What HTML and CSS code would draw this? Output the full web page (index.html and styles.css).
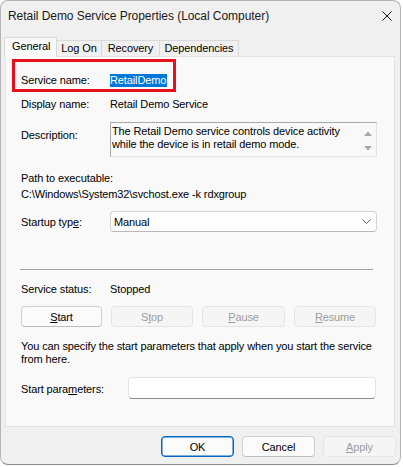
FILE: index.html
```html
<!DOCTYPE html>
<html>
<head>
<meta charset="utf-8">
<link rel="stylesheet" href="styles.css">
</head>
<body>
<div class="window">
  <div class="titlebar">
    <span class="title">Retail Demo Service Properties (Local Computer)</span>
    <svg class="close" width="10" height="10" viewBox="0 0 10 10"><path d="M0.5 0.5 L9.5 9.5 M9.5 0.5 L0.5 9.5" stroke="#1b1b1b" stroke-width="1" fill="none"/></svg>
  </div>
  <div class="tabs">
    <div class="tab active">General</div>
    <div class="tab w-logon">Log On</div>
    <div class="tab w-recovery">Recovery</div>
    <div class="tab w-deps">Dependencies</div>
  </div>
  <div class="panel">
    <div class="annot"></div>
    <div class="row r-name"><span class="label">Service name:</span><span class="sel">RetailDemo</span></div>
    <div class="row r-display"><span class="label">Display name:</span><span>Retail Demo Service</span></div>
    <div class="row r-desc">
      <span class="label desc-label">Description:</span>
      <div class="desc">
        <div class="desc-text">The Retail Demo service controls device activity while the device is in retail demo mode.</div>
        <div class="scroll">
          <svg width="8" height="5" viewBox="0 0 8 5"><polygon points="0,5 4,0.5 8,5" fill="#a6a6a6"/></svg>
          <svg width="8" height="5" viewBox="0 0 8 5"><polygon points="0,0 4,4.5 8,0" fill="#a6a6a6"/></svg>
        </div>
      </div>
    </div>
    <div class="row r-pathlabel">Path to executable:</div>
    <div class="row r-path">C:\Windows\System32\svchost.exe -k rdxgroup</div>
    <div class="row r-startup">
      <span class="label ctl-label">Startup typ<u>e</u>:</span>
      <div class="combo"><span>Manual</span>
        <svg width="9" height="5" viewBox="0 0 9 5"><path d="M0.5 0.5 L4.5 4.5 L8.5 0.5" stroke="#5c5c5c" stroke-width="1" fill="none"/></svg>
      </div>
    </div>
    <div class="sep"></div>
    <div class="row r-status"><span class="label">Service status:</span><span>Stopped</span></div>
    <div class="row r-buttons">
      <div class="btn"><span><u>S</u>tart</span></div>
      <div class="btn disabled"><span>S<u>t</u>op</span></div>
      <div class="btn disabled"><span><u>P</u>ause</span></div>
      <div class="btn disabled"><span><u>R</u>esume</span></div>
    </div>
    <div class="row r-para">You can specify the start parameters that apply when you start the service<br>from here.</div>
    <div class="row r-params">
      <span class="label ctl-label params-label">Start para<u>m</u>eters:</span>
      <div class="input"></div>
    </div>
  </div>
  <div class="footer">
    <div class="btn fbtn default">OK</div>
    <div class="btn fbtn">Cancel</div>
    <div class="btn fbtn disabled"><span><u>A</u>pply</span></div>
  </div>
</div>
</body>
</html>
```

FILE: styles.css
```css
* { box-sizing: border-box; }
html, body { margin: 0; padding: 0; background: #ffffff; }
body {
  font-family: "Liberation Sans", Arial, sans-serif;
  font-size: 11px;
  letter-spacing: -0.12px;
  color: #000;
}
u { text-decoration: underline; text-underline-offset: 1px; }

.window {
  width: 401px;
  height: 465px;
  background: #f0f0f0;
  border: 1px solid #b4b4b4;
  border-bottom-color: #8c8c8c;
  border-radius: 8px;
  overflow: hidden;
  display: flex;
  flex-direction: column;
}

.titlebar {
  height: 30px;
  flex: none;
  display: flex;
  align-items: center;
  justify-content: space-between;
  padding-left: 7px;
  padding-right: 7px;
}
.title { font-size: 12px; letter-spacing: -0.05px; color: #1a1a1a; }
.close { margin-right: 1px; }

.tabs {
  display: flex;
  align-items: flex-end;
  height: 19px;
  margin: 6px 0 0 3px;
  flex: none;
}
.tab {
  height: 16px;
  line-height: 15px;
  border: 1px solid #d9d9d9;
  border-bottom: none;
  border-left: none;
  text-align: center;
  background: #f0f0f0;
}
.tab.active {
  position: relative;
  z-index: 1;
  width: 53px;
  height: 20px;
  margin-bottom: -1px;
  border-left: 1px solid #d9d9d9;
  background: #f9f9f9;
  text-align: left;
  padding: 1px 0 0 7px;
}
.w-logon { width: 45px; }
.w-recovery { width: 58px; }
.w-deps { width: 79px; }

.panel {
  position: relative;
  flex: none;
  margin-left: 4px;
  width: 390px;
  height: 371px;
  background: #f9f9f9;
  border: 1px solid #e3e3e3;
}
.annot {
  position: absolute;
  left: 6px;
  top: 2px;
  width: 164px;
  height: 33px;
  border: 3px solid #e8101a;
}

.row {
  display: flex;
  align-items: center;
  margin-left: 15px;
  line-height: 16px;
}
.label { width: 89px; flex: none; }
.ctl-label { padding-top: 1px; }

.r-name { margin-top: 15px; }
.sel {
  background: #0078d7;
  color: #fff;
  line-height: 13px;
  padding: 0 1px 0 0;
}
.r-display { margin-top: 8px; }

.r-desc { margin-top: 10px; align-items: flex-start; }
.desc-label { padding-top: 5px; }
.desc {
  width: 267px;
  height: 35px;
  display: flex;
  border: 1px solid #e2e2e2;
  border-top-color: #a9a9a9;
  border-left-color: #a9a9a9;
  background: #f9f9f9;
}
.desc-text {
  flex: 1;
  padding: 2px 0 0 1px;
  line-height: 13px;
}
.scroll {
  width: 16px;
  flex: none;
  display: flex;
  flex-direction: column;
  align-items: center;
  padding-top: 8px;
  gap: 10px;
  background: #f8f8f8;
}

.r-pathlabel { margin-top: 13px; }
.r-path { margin-top: 0; }

.r-startup { margin-top: 9px; }
.combo {
  width: 267px;
  height: 21px;
  border: 1px solid #d3d3d3;
  border-bottom-color: #b9b9b9;
  border-radius: 4px;
  background: #fdfdfd;
  display: flex;
  align-items: center;
  justify-content: space-between;
  padding: 0 5px 0 3px;
}

.sep {
  margin: 37px 0 0 14px;
  width: 353px;
  height: 1px;
  background: #a0a0a0;
}

.r-status { margin-top: 11px; }

.r-buttons {
  margin-top: 9px;
  display: grid;
  grid-template-columns: 81px 82px 83px 82px;
  column-gap: 9px;
  width: 356px;
}
.btn {
  height: 21px;
  border: 1px solid #d0d0d0;
  border-bottom-color: #bdbdbd;
  border-radius: 4px;
  background: #fbfbfb;
  display: flex;
  align-items: center;
  justify-content: center;
  line-height: 14px;
}
.btn.disabled {
  background: #f5f5f5;
  border-color: #e5e5e5;
  color: #9d9d9d;
}
.btn.default {
  border: 1px solid #0067c0;
  box-shadow: inset 0 0 0 0.5px #0067c0;
}

.r-para { margin-top: 13px; line-height: 13px; display: block; }

.r-params { margin-top: 11px; }
.params-label { width: 107px; }
.input {
  width: 248px;
  height: 22px;
  background: #ffffff;
  border: 1px solid #e3e3e3;
  border-bottom: 1px solid #8a8a8a;
  border-radius: 4px;
}

.footer {
  flex: none;
  margin-top: 9px;
  display: flex;
  justify-content: flex-end;
  gap: 8px;
  padding-right: 4px;
}
.fbtn { width: 73px; }
```
